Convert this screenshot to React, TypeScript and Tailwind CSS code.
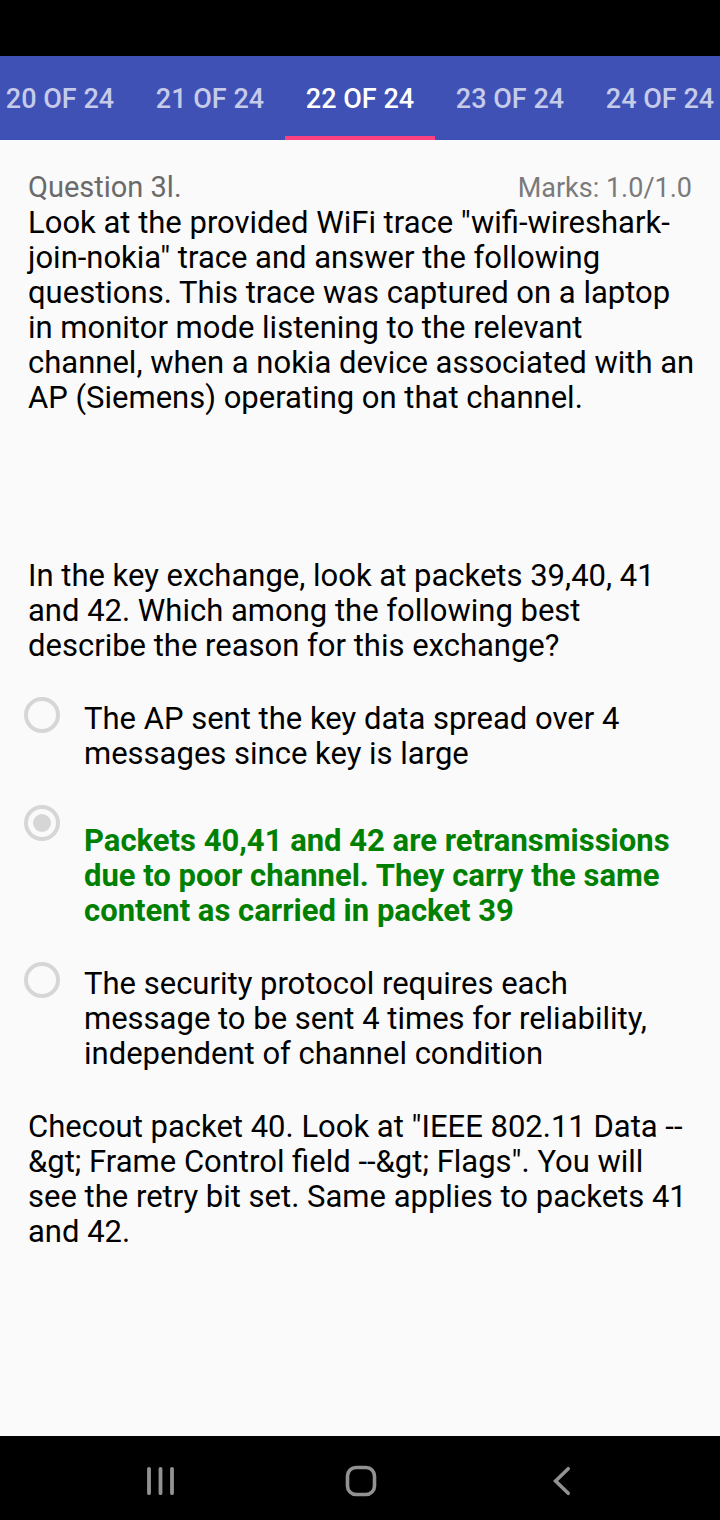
import { useState } from 'react';

const tabs = ['20 OF 24', '21 OF 24', '22 OF 24', '23 OF 24', '24 OF 24'];

const options = [
  {
    text: 'The AP sent the key data spread over 4 messages since key is large',
    className: '',
  },
  {
    text: 'Packets 40,41 and 42 are retransmissions due to poor channel. They carry the same content as carried in packet 39',
    className: 'pt-[14px] font-bold text-[#008000]',
  },
  {
    text: 'The security protocol requires each message to be sent 4 times for reliability, independent of channel condition',
    className: '',
  },
];

function TabBar() {
  return (
    <nav className="flex h-[84px] justify-center overflow-hidden bg-[#3f51b5]">
      {tabs.map((tab, i) => (
        <button
          key={tab}
          type="button"
          className={
            i === 2
              ? 'w-[150px] shrink-0 border-b-4 border-[#ff4081] pt-[6px] text-[27px] font-medium whitespace-nowrap text-white'
              : 'w-[150px] shrink-0 border-b-4 border-transparent pt-[6px] text-[27px] font-medium whitespace-nowrap text-[#c5cbe9]'
          }
        >
          {tab}
        </button>
      ))}
    </nav>
  );
}

function Options() {
  const [selected, setSelected] = useState(1);
  return (
    <fieldset className="mt-[38px] flex flex-col gap-[38px]">
      {options.map((option, i) => (
        <label key={option.text} className="flex items-start">
          <input
            type="radio"
            name="answer"
            checked={selected === i}
            onChange={() => setSelected(i)}
            className="-mt-1 -ml-1 size-9 shrink-0 appearance-none rounded-full border-4 border-[#d6d6d6] bg-clip-content p-[5px] checked:bg-[#d6d6d6]"
          />
          <span className={`ml-6 ${option.className}`}>{option.text}</span>
        </label>
      ))}
    </fieldset>
  );
}

function SystemNav() {
  return (
    <footer className="grid h-[84px] grid-cols-[1fr_82px_1fr] items-center bg-black pt-[6px] pl-[2px] text-[#929292]">
      <button type="button" aria-label="Recent apps" className="flex justify-center">
        <svg width="30" height="30" viewBox="0 0 30 30" fill="none" stroke="currentColor" strokeWidth="3.8" strokeLinecap="round">
          <path d="M3 2.8v24.4M14.5 2.8v24.4M26 2.8v24.4" />
        </svg>
      </button>
      <button type="button" aria-label="Home" className="flex justify-center">
        <svg width="32" height="32" viewBox="0 0 32 32" fill="none" stroke="currentColor" strokeWidth="3.6">
          <rect x="2.5" y="2.5" width="27" height="27" rx="8.5" />
        </svg>
      </button>
      <button type="button" aria-label="Back" className="flex justify-center">
        <svg width="20" height="30" viewBox="0 0 20 30" fill="none" stroke="currentColor" strokeWidth="3.6" strokeLinecap="round">
          <path d="M17.2 2.7 4.6 15l12.6 12.3" />
        </svg>
      </button>
    </footer>
  );
}

export default function App() {
  return (
    <div className="flex min-h-screen flex-col bg-[#fafafa] font-[Roboto,sans-serif] text-[31px] leading-[35px] text-black">
      <div className="h-14 bg-black" />
      <TabBar />
      <main className="grow pt-[31px] pr-6 pl-7">
        <header className="flex items-baseline justify-between pr-1 leading-[33px]">
          <h1 className="text-[29px] text-[#6a6a6a]">Question 3l.</h1>
          <p className="text-[27px] text-[#7a7a7a]">Marks: 1.0/1.0</p>
        </header>
        <p>
          Look at the provided WiFi trace "wifi-wireshark-join-nokia" trace and answer the following questions. This
          trace was captured on a laptop in monitor mode listening to the relevant channel, when a nokia device
          associated with an AP (Siemens) operating on that channel.
        </p>
        <p className="mt-[143px]">
          In the key exchange, look at packets 39,40, 41 and 42. Which among the following best describe the reason for
          this exchange?
        </p>
        <Options />
        <p className="mt-[38px]">
          Checout packet 40. Look at "IEEE 802.11 Data --&amp;gt; Frame Control field --&amp;gt; Flags". You will see
          the retry bit set. Same applies to packets 41 and 42.
        </p>
      </main>
      <SystemNav />
    </div>
  );
}
